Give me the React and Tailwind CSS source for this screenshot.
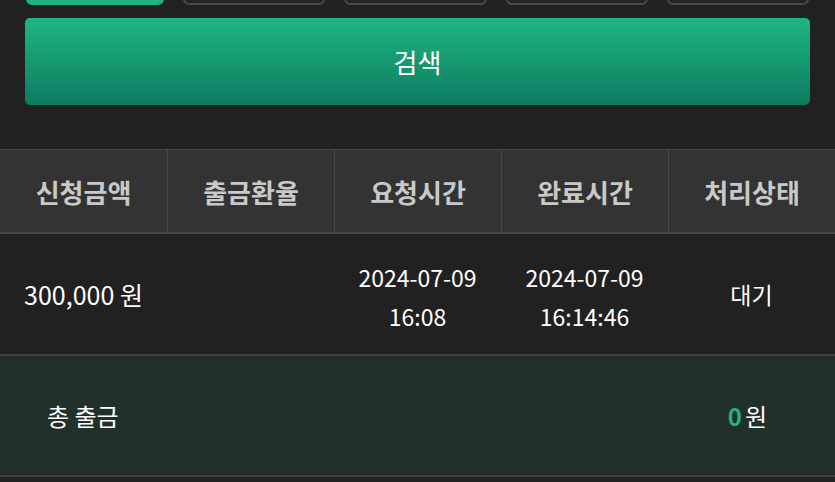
const tabs = ["", "", "", "", ""];

const columns = ["신청금액", "출금환율", "요청시간", "완료시간", "처리상태"];

const rows = [
  {
    amount: "300,000 원",
    rate: "",
    requested: ["2024-07-09", "16:08"],
    completed: ["2024-07-09", "16:14:46"],
    status: "대기",
  },
];

export default function App() {
  return (
    <div
      className="w-[835px] h-[482px] overflow-hidden bg-[#212121] text-white"
      style={{ fontFamily: '"Noto Sans CJK KR", "Noto Sans", sans-serif' }}
    >
      {/* period tabs, scrolled mostly out of view */}
      <div className="flex gap-[19px] pl-[26px] pr-[26px] mt-[-45px]">
        {tabs.map((t, i) => (
          <button
            key={i}
            className={`flex-1 h-[50px] rounded-[6px] ${
              i === 0 ? "bg-[#1fb282]" : "border-2 border-[#4a4a4a] bg-[#242424]"
            }`}
          >
            {t}
          </button>
        ))}
      </div>

      <div className="px-[25px] mt-[13px]">
        <button className="w-full h-[87px] rounded-[5px] bg-gradient-to-b from-[#1fb585] to-[#0e7c5f] text-[26px] text-white">
          검색
        </button>
      </div>

      <div className="mt-[44px]">
        <div className="grid grid-cols-5 h-[85px] bg-[#333333] border-t border-[#444444] border-b-2 border-b-[#474747]">
          {columns.map((c, i) => (
            <div
              key={c}
              className={`flex items-center justify-center text-[26px] font-bold text-[#c9c9c9] ${
                i > 0 ? "border-l border-[#474747]" : ""
              }`}
            >
              {c}
            </div>
          ))}
        </div>

        {rows.map((r, i) => (
          <div key={i} className="grid grid-cols-5 h-[120px] text-[23px] text-center leading-[39px]">
            <div className="flex items-center justify-center text-[25px]">{r.amount}</div>
            <div className="flex items-center justify-center">{r.rate}</div>
            <div className="flex flex-col items-center justify-center pt-[6px]">
              <span>{r.requested[0]}</span>
              <span>{r.requested[1]}</span>
            </div>
            <div className="flex flex-col items-center justify-center pt-[6px]">
              <span>{r.completed[0]}</span>
              <span>{r.completed[1]}</span>
            </div>
            <div className="flex items-center justify-center">{r.status}</div>
          </div>
        ))}

        <div className="flex items-center justify-between h-[123px] bg-[#22302b] border-y-2 border-[#3b4440] pl-[47px] pr-[68px] text-[24px]">
          <span>총 출금</span>
          <span>
            <span className="text-[#22b07e] font-bold mr-[3px]">0</span>원
          </span>
        </div>
      </div>
    </div>
  );
}
